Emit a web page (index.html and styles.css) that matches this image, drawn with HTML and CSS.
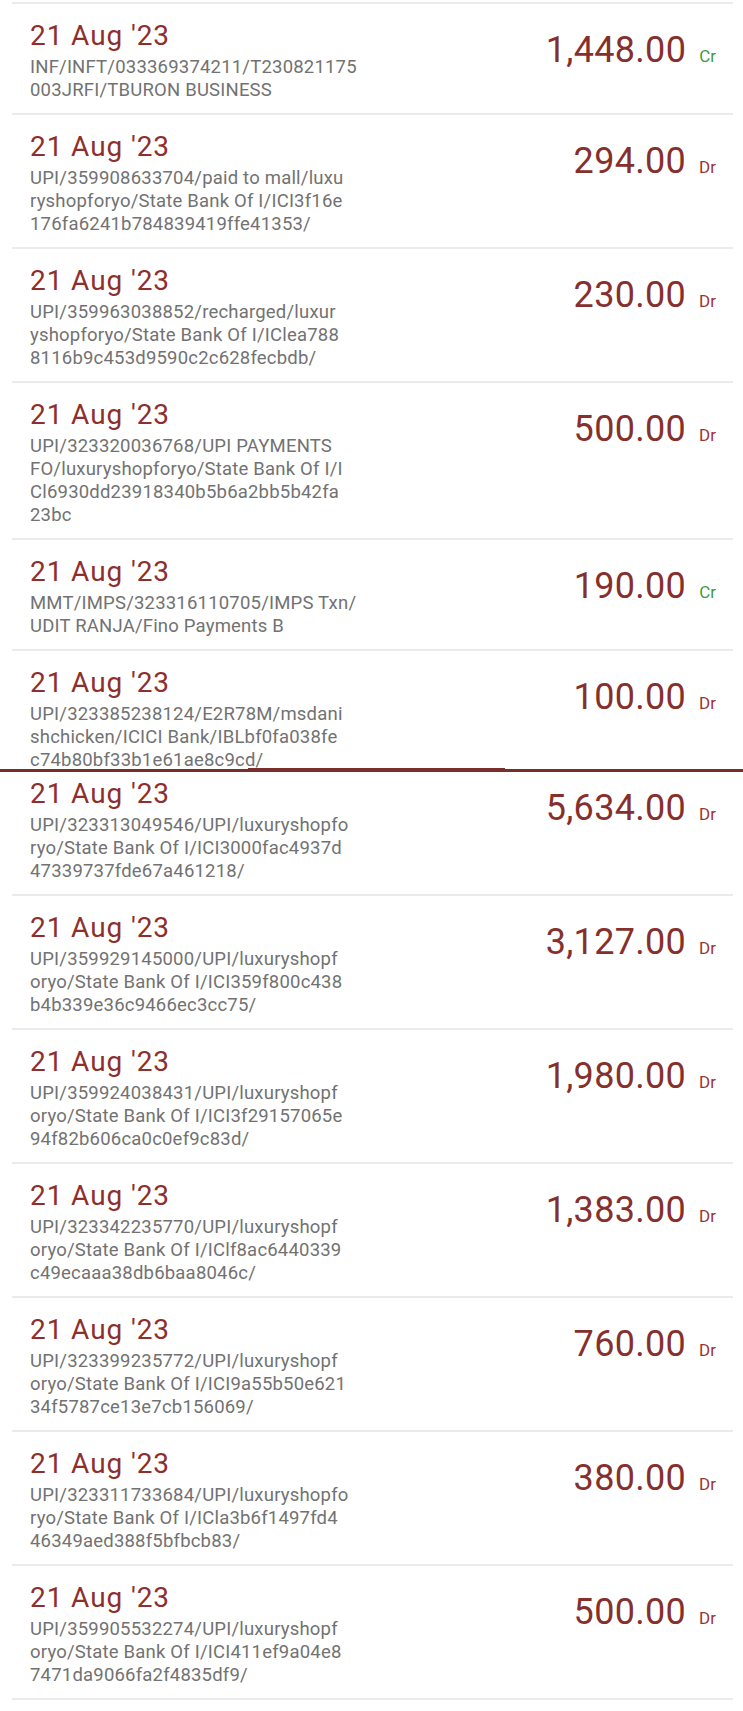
FILE: index.html
```html
<!DOCTYPE html>
<html lang="en">
<head>
    <meta charset="UTF-8">
    <meta name="viewport" content="width=device-width, initial-scale=1.0">
    <title>Account Statement</title>
    <link rel="stylesheet" href="styles.css">
</head>
<body>
    <!-- first screenshot part -->
    <div class="panel panel-top">
        <div class="list list-first">
            <div class="txn">
                <div class="info">
                    <div class="date">21 Aug '23</div>
                    <div class="desc">INF/INFT/033369374211/T230821175<br>003JRFI/TBURON BUSINESS</div>
                </div>
                <div class="amount"><span class="value">1,448.00</span><span class="type cr">Cr</span></div>
            </div>
            <div class="txn">
                <div class="info">
                    <div class="date">21 Aug '23</div>
                    <div class="desc">UPI/359908633704/paid to mall/luxu<br>ryshopforyo/State Bank Of I/ICI3f16e<br>176fa6241b784839419ffe41353/</div>
                </div>
                <div class="amount"><span class="value">294.00</span><span class="type dr">Dr</span></div>
            </div>
            <div class="txn">
                <div class="info">
                    <div class="date">21 Aug '23</div>
                    <div class="desc">UPI/359963038852/recharged/luxur<br>yshopforyo/State Bank Of I/IClea788<br>8116b9c453d9590c2c628fecbdb/</div>
                </div>
                <div class="amount"><span class="value">230.00</span><span class="type dr">Dr</span></div>
            </div>
            <div class="txn">
                <div class="info">
                    <div class="date">21 Aug '23</div>
                    <div class="desc">UPI/323320036768/UPI PAYMENTS<br>FO/luxuryshopforyo/State Bank Of I/I<br>Cl6930dd23918340b5b6a2bb5b42fa<br>23bc</div>
                </div>
                <div class="amount"><span class="value">500.00</span><span class="type dr">Dr</span></div>
            </div>
            <div class="txn">
                <div class="info">
                    <div class="date">21 Aug '23</div>
                    <div class="desc">MMT/IMPS/323316110705/IMPS Txn/<br>UDIT RANJA/Fino Payments B</div>
                </div>
                <div class="amount"><span class="value">190.00</span><span class="type cr">Cr</span></div>
            </div>
            <div class="txn">
                <div class="info">
                    <div class="date">21 Aug '23</div>
                    <div class="desc">UPI/323385238124/E2R78M/msdani<br>shchicken/ICICI Bank/IBLbf0fa038fe<br>c74b80bf33b1e61ae8c9cd/</div>
                </div>
                <div class="amount"><span class="value">100.00</span><span class="type dr">Dr</span></div>
            </div>
        </div>
    </div>

    <div class="divider">
        <span class="line"></span>
        <span class="indicator"></span>
        <span class="line line-rest"></span>
    </div>

    <!-- second screenshot part -->
    <div class="panel panel-bottom">
        <div class="list list-scrolled">
            <div class="txn">
                <div class="info">
                    <div class="date">21 Aug '23</div>
                    <div class="desc">UPI/323313049546/UPI/luxuryshopfo<br>ryo/State Bank Of I/ICI3000fac4937d<br>47339737fde67a461218/</div>
                </div>
                <div class="amount"><span class="value">5,634.00</span><span class="type dr">Dr</span></div>
            </div>
            <div class="txn">
                <div class="info">
                    <div class="date">21 Aug '23</div>
                    <div class="desc">UPI/359929145000/UPI/luxuryshopf<br>oryo/State Bank Of I/ICI359f800c438<br>b4b339e36c9466ec3cc75/</div>
                </div>
                <div class="amount"><span class="value">3,127.00</span><span class="type dr">Dr</span></div>
            </div>
            <div class="txn">
                <div class="info">
                    <div class="date">21 Aug '23</div>
                    <div class="desc">UPI/359924038431/UPI/luxuryshopf<br>oryo/State Bank Of I/ICI3f29157065e<br>94f82b606ca0c0ef9c83d/</div>
                </div>
                <div class="amount"><span class="value">1,980.00</span><span class="type dr">Dr</span></div>
            </div>
            <div class="txn">
                <div class="info">
                    <div class="date">21 Aug '23</div>
                    <div class="desc">UPI/323342235770/UPI/luxuryshopf<br>oryo/State Bank Of I/IClf8ac6440339<br>c49ecaaa38db6baa8046c/</div>
                </div>
                <div class="amount"><span class="value">1,383.00</span><span class="type dr">Dr</span></div>
            </div>
            <div class="txn">
                <div class="info">
                    <div class="date">21 Aug '23</div>
                    <div class="desc">UPI/323399235772/UPI/luxuryshopf<br>oryo/State Bank Of I/ICI9a55b50e621<br>34f5787ce13e7cb156069/</div>
                </div>
                <div class="amount"><span class="value">760.00</span><span class="type dr">Dr</span></div>
            </div>
            <div class="txn">
                <div class="info">
                    <div class="date">21 Aug '23</div>
                    <div class="desc">UPI/323311733684/UPI/luxuryshopfo<br>ryo/State Bank Of I/ICla3b6f1497fd4<br>46349aed388f5bfbcb83/</div>
                </div>
                <div class="amount"><span class="value">380.00</span><span class="type dr">Dr</span></div>
            </div>
            <div class="txn">
                <div class="info">
                    <div class="date">21 Aug '23</div>
                    <div class="desc">UPI/359905532274/UPI/luxuryshopf<br>oryo/State Bank Of I/ICI411ef9a04e8<br>7471da9066fa2f4835df9/</div>
                </div>
                <div class="amount"><span class="value">500.00</span><span class="type dr">Dr</span></div>
            </div>
        </div>
    </div>
</body>
</html>
```

FILE: styles.css
```css
body {
    margin: 0;
    background: #ffffff;
    font-family: Roboto, "Liberation Sans", sans-serif;
}
.panel {
    overflow: hidden;
}
.panel-top {
    height: 768px;
}
.panel-bottom {
    height: 939px;
}
.list {
    margin: 0 10px 0 12px;
}
.list-first {
    margin-top: 2px;
    border-top: 2px solid #ebebeb;
}
.list-scrolled {
    margin-top: -10px;
}
.txn {
    display: flex;
    justify-content: space-between;
    align-items: flex-start;
    padding: 14px 17px 11px 18px;
    border-bottom: 2px solid #ebebeb;
}
.date {
    font-size: 28px;
    line-height: 36px;
    letter-spacing: 0.9px;
    color: #8e2f2d;
}
.desc {
    margin-top: 2px;
    font-size: 18.5px;
    line-height: 23px;
    letter-spacing: 0.2px;
    color: #727272;
    white-space: nowrap;
}
.amount {
    display: flex;
    align-items: baseline;
    gap: 13px;
    margin-top: 10px;
}
.value {
    font-size: 36px;
    line-height: 44px;
    letter-spacing: 0.3px;
    color: #86302e;
}
.type {
    font-size: 17px;
}
.type.dr {
    color: #9e3331;
}
.type.cr {
    color: #3f9a3f;
}
.divider {
    display: flex;
    align-items: flex-end;
    height: 4px;
}
.divider .line {
    width: 248px;
    height: 3px;
    background: #7a2e2a;
}
.divider .indicator {
    width: 257px;
    height: 4px;
    background: #7a2e2a;
}
.divider .line-rest {
    flex: 1;
}
```
